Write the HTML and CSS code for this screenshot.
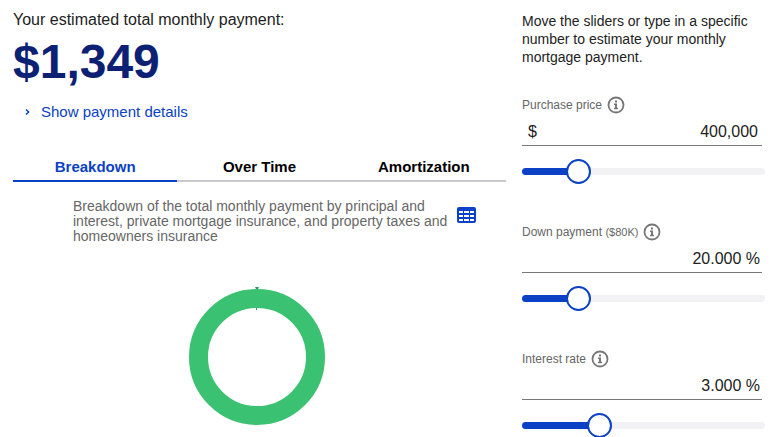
FILE: index.html
```html
<!DOCTYPE html>
<html lang="en">
<head>
    <meta charset="UTF-8">
    <meta name="viewport" content="width=device-width, initial-scale=1">
    <title>Mortgage payment calculator</title>
    <link rel="stylesheet" href="styles.css">
</head>
<body>
    <!-- Info icon shared by the field labels -->
    <svg class="sprite" width="0" height="0" aria-hidden="true">
        <symbol id="info" viewBox="0 0 18 18">
            <circle cx="9" cy="9" r="7.5" fill="none" stroke="currentColor" stroke-width="1.8"/>
            <path d="M8 4.6h2v2H8zM7 7.6h3v4.2h1v1.4H7v-1.4h1V9H7z" fill="currentColor"/>
        </symbol>
    </svg>

    <main class="calculator">
        <section class="results">
            <h1 class="results-title">Your estimated total monthly payment:</h1>
            <p class="total">$1,349</p>
            <a class="details-link" href="#details">
                <svg class="chevron" width="5" height="8" viewBox="0 0 5 8" aria-hidden="true">
                    <path d="M1 1.5L3.6 4L1 6.5"/>
                </svg>
                Show payment details
            </a>

            <div class="tabs" role="tablist">
                <button class="tab active" type="button" role="tab" aria-selected="true">Breakdown</button>
                <button class="tab" type="button" role="tab" aria-selected="false">Over Time</button>
                <button class="tab" type="button" role="tab" aria-selected="false">Amortization</button>
            </div>

            <div class="summary">
                <p class="summary-text">Breakdown of the total monthly payment by principal and interest, private mortgage insurance, and property taxes and homeowners insurance</p>
                <button class="table-button" type="button" aria-label="Show as table">
                    <svg width="19" height="16" viewBox="0 0 19 16" aria-hidden="true">
                        <rect width="19" height="16" rx="2" fill="#0a41c5"/>
                        <path d="M2 4h4v2H2zM7 4h5v2H7zM13 4h4v2h-4zM2 8h4v2H2zM7 8h5v2H7zM13 8h4v2h-4zM2 12h4v2H2zM7 12h5v2H7zM13 12h4v2h-4z" fill="#fff"/>
                    </svg>
                </button>
            </div>

            <div class="chart">
                <svg width="138" height="140" viewBox="0 0 138 140" role="img" aria-label="Payment breakdown">
                    <circle cx="69" cy="71" r="58.5" fill="none" stroke="#3ac172" stroke-width="19"/>
                    <path d="M67 1h4l-1 2h-2zM68 22h1v2h-1z" fill="#2f9d5c"/>
                </svg>
            </div>
        </section>

        <form class="inputs">
            <p class="intro">Move the sliders or type in a specific number to estimate your monthly mortgage payment.</p>

            <div class="field">
                <div class="field-head">
                    <label for="price">Purchase price</label>
                    <button class="info" type="button" aria-label="About purchase price"><svg width="18" height="18"><use href="#info"/></svg></button>
                </div>
                <div class="value">
                    <span>$</span>
                    <input class="price" id="price" type="text" value="400,000">
                </div>
                <input class="slider" type="range" min="0" max="100" value="20" style="--fill: 22%" aria-label="Purchase price">
            </div>

            <div class="field">
                <div class="field-head">
                    <label for="down">Down payment <small>($80K)</small></label>
                    <button class="info" type="button" aria-label="About down payment"><svg width="18" height="18"><use href="#info"/></svg></button>
                </div>
                <div class="value">
                    <input id="down" type="text" value="20.000 %">
                </div>
                <input class="slider" type="range" min="0" max="100" value="20" style="--fill: 22%" aria-label="Down payment">
            </div>

            <div class="field">
                <div class="field-head">
                    <label for="rate">Interest rate</label>
                    <button class="info" type="button" aria-label="About interest rate"><svg width="18" height="18"><use href="#info"/></svg></button>
                </div>
                <div class="value">
                    <input id="rate" type="text" value="3.000 %">
                </div>
                <input class="slider" type="range" min="0" max="100" value="30" style="--fill: 32%" aria-label="Interest rate">
            </div>
        </form>
    </main>
</body>
</html>
```

FILE: styles.css
```css
* {
    box-sizing: border-box;
    margin: 0;
    padding: 0;
}

body {
    background: #fff;
    color: #222;
    font: 16px/20px "Liberation Sans", Arial, sans-serif;
}

button {
    background: none;
    border: 0;
    font: inherit;
    cursor: pointer;
}

svg {
    display: block;
}

.sprite {
    position: absolute;
}

.calculator {
    display: grid;
    grid-template-columns: minmax(0, 1fr) 243px;
    column-gap: 16px;
    padding: 10px 15px 0 13px;
}

/* Results */
.results-title {
    font-size: 16px;
    font-weight: normal;
}

.total {
    color: #0c2074;
    font-size: 48px;
    font-weight: bold;
    line-height: 64px;
}

.details-link {
    display: flex;
    align-items: center;
    gap: 11px;
    margin-top: 8px;
    padding-left: 12px;
    color: #0a41c5;
    font-size: 15px;
    text-decoration: none;
}

.chevron path {
    fill: none;
    stroke: #0a41c5;
    stroke-width: 1.5;
}

.tabs {
    display: grid;
    grid-template-columns: repeat(3, 1fr);
    margin-top: 32px;
}

.tab {
    height: 28px;
    border-bottom: 2px solid #c8c9cc;
    color: #000;
    font-size: 15px;
    font-weight: bold;
}

.tab.active {
    border-color: #0a41c5;
    color: #0a41c5;
}

.summary {
    display: flex;
    align-items: flex-start;
    justify-content: space-between;
    margin-top: 17px;
    padding: 0 30px 0 60px;
}

.summary-text {
    max-width: 380px;
    color: #666;
    font-size: 14px;
    line-height: 15px;
}

.table-button {
    margin-top: 8px;
}

.chart {
    display: flex;
    justify-content: center;
    padding: 42px 6px 0 0;
}

/* Inputs */
.intro {
    margin: 2px 0 30px;
    font-size: 14px;
    line-height: 18px;
}

.field {
    margin-bottom: 39px;
}

.field:last-child {
    margin-bottom: 0;
}

.field-head {
    display: flex;
    align-items: center;
    gap: 5px;
    height: 18px;
    color: #666;
    font-size: 12px;
}

.field-head small {
    font-size: 11px;
}

.info {
    color: #777;
}

.value {
    display: flex;
    align-items: center;
    height: 32px;
    margin-right: 3px;
    padding: 5px 2px 0 6px;
    border-bottom: 1px solid #777;
}

.value input {
    flex: 1;
    min-width: 0;
    border: 0;
    outline: 0;
    background: none;
    color: #222;
    font: inherit;
    text-align: right;
}

.value .price {
    padding-right: 2px;
}

/* Slider */
.slider {
    -webkit-appearance: none;
    appearance: none;
    display: block;
    width: 100%;
    height: 25px;
    margin-top: 13px;
    background: none;
}

.slider::-webkit-slider-runnable-track {
    height: 7px;
    border-radius: 4px;
    background: linear-gradient(to right, #0a41c5 var(--fill), #f2f2f4 var(--fill));
}

.slider::-webkit-slider-thumb {
    -webkit-appearance: none;
    width: 25px;
    height: 25px;
    margin-top: -9px;
    border: 2px solid #0a41c5;
    border-radius: 50%;
    background: #fff;
}
```
